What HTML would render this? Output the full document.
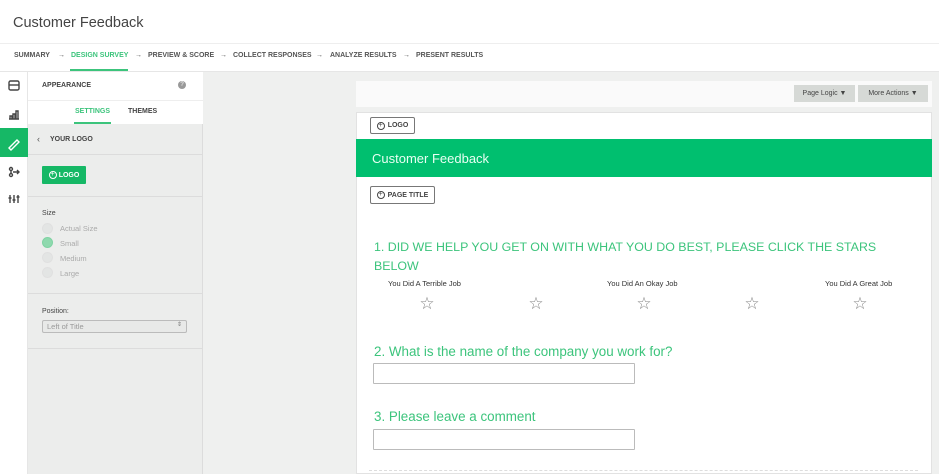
<!DOCTYPE html>
<html><head><style>
*{box-sizing:border-box;margin:0;padding:0}
body{width:939px;height:474px;overflow:hidden;background:#fff;font-family:"Liberation Sans",sans-serif;position:relative;color:#333}
.abs{position:absolute}
.nav span{position:absolute;top:52px;font-size:7px;font-weight:bold;color:#555;letter-spacing:0}
.arr{color:#ccc;font-weight:normal!important}
.btn{position:absolute;border:1px solid #777;border-radius:2px;background:#fff;font-size:7px;font-weight:bold;color:#444;display:flex;align-items:center;justify-content:center;gap:3px}
.plus{display:inline-block;width:8px;height:8px;border:1px solid currentColor;border-radius:50%;font-size:7px;line-height:6px;text-align:center;font-weight:normal}
.star{position:absolute;top:294px;font-size:17px;color:#888;width:20px;text-align:center}
.lbl{position:absolute;top:279px;font-size:7.5px;color:#333}
.radio{position:absolute;left:42px;width:11px;height:11px;border-radius:50%;background:#e3e5e4;border:1px solid #e0e0e0}
.rl{position:absolute;left:60px;font-size:7.5px;color:#aaa}
.sep{position:absolute;left:28px;width:175px;height:1px;background:#dcdcdc}
</style></head><body>
<div class="abs" style="left:13px;top:15px;font-size:14.5px;color:#444">Customer Feedback</div>
<div class="abs" style="left:0;top:43px;width:939px;height:1px;background:#eee"></div>
<div class="nav">
<span style="left:14px">SUMMARY</span><span class="arr" style="left:58px">→</span>
<span style="left:71px;color:#3cc47c">DESIGN SURVEY</span><span class="arr" style="left:135px">→</span>
<span style="left:148px">PREVIEW &amp; SCORE</span><span class="arr" style="left:220px">→</span>
<span style="left:233px">COLLECT RESPONSES</span><span class="arr" style="left:316px">→</span>
<span style="left:330px">ANALYZE RESULTS</span><span class="arr" style="left:403px">→</span>
<span style="left:416px">PRESENT RESULTS</span>
</div>
<div class="abs" style="left:70px;top:69px;width:58px;height:2px;background:#3cc47c"></div>
<div class="abs" style="left:0;top:71px;width:939px;height:1px;background:#e6e6e6"></div>
<div class="abs" style="left:203px;top:72px;width:736px;height:402px;background:#eff0ef"></div>
<div class="abs" style="left:0;top:72px;width:28px;height:402px;background:#fff;border-right:1px solid #e6e6e6"></div>
<div class="abs" style="left:0;top:128px;width:28px;height:29px;background:#16b866"></div>
<svg class="abs" style="left:0;top:72px" width="28" height="145" fill="none" stroke="#444" stroke-width="1.4">
<rect x="9" y="9" width="10" height="9" rx="1.5"/><line x1="9" y1="13" x2="19" y2="13"/>
<path d="M9 47h10M10 47v-3h2v3M13 47v-5h2v5M16 47v-8h2v8"/>
<path d="M9 76l8-8 2 2-8 8z" stroke="#fff"/>
<circle cx="11" cy="97" r="1.5"/><circle cx="11" cy="103" r="1.5"/><path d="M11 98.5v3M13 100h6M17 98l2 2-2 2"/>
<path d="M10 123v8M14 123v8M18 123v8M8.5 126h3M12.5 128h3M16.5 125h3"/>
</svg>
<div class="abs" style="left:28px;top:72px;width:175px;height:402px;background:#ecedec;border-right:1px solid #dcdcdc"></div>
<div class="abs" style="left:28px;top:72px;width:175px;height:52px;background:#fff"></div>
<div class="abs" style="left:42px;top:82px;font-size:7px;font-weight:bold;color:#444">APPEARANCE</div>
<div class="abs" style="left:178px;top:81px;width:8px;height:8px;border-radius:50%;background:#999;color:#fff;font-size:6px;text-align:center;line-height:8px">?</div>
<div class="sep" style="top:100px;background:#eee"></div>
<div class="abs" style="left:75px;top:108px;font-size:7px;font-weight:bold;color:#3cc47c">SETTINGS</div>
<div class="abs" style="left:74px;top:122px;width:37px;height:2px;background:#3cc47c"></div>
<div class="abs" style="left:128px;top:108px;font-size:7px;font-weight:bold;color:#444">THEMES</div>
<div class="abs" style="left:37px;top:134px;font-size:9px;color:#555">‹</div>
<div class="abs" style="left:50px;top:136px;font-size:7px;font-weight:bold;color:#444">YOUR LOGO</div>
<div class="sep" style="top:154px"></div>
<div class="abs" style="left:42px;top:166px;width:44px;height:18px;background:#16b866;border-radius:1px;color:#fff;font-size:7px;font-weight:bold;display:flex;align-items:center;justify-content:center;gap:2px"><span class="plus" style="border-color:#fff">+</span>LOGO</div>
<div class="sep" style="top:196px"></div>
<div class="abs" style="left:42px;top:210px;font-size:7px;color:#444">Size</div>
<div class="radio" style="top:223px"></div><div class="rl" style="top:224px">Actual Size</div>
<div class="radio" style="top:237px;background:#8fd9ae;border-color:#7fd3a3"></div><div class="rl" style="top:239px">Small</div>
<div class="radio" style="top:252px"></div><div class="rl" style="top:254px">Medium</div>
<div class="radio" style="top:267px"></div><div class="rl" style="top:269px">Large</div>
<div class="sep" style="top:293px"></div>
<div class="abs" style="left:42px;top:308px;font-size:7px;color:#444">Position:</div>
<div class="abs" style="left:42px;top:320px;width:145px;height:13px;border:1px solid #bbb;border-radius:2px;background:#e8e9e8;font-size:7.5px;color:#999;padding:1px 4px">Left of Title<span style="position:absolute;right:4px;top:0;font-size:6px;color:#777">⇕</span></div>
<div class="sep" style="top:348px"></div>
<div class="abs" style="left:356px;top:81px;width:576px;height:26px;background:#fafafa"></div>
<div class="abs" style="left:794px;top:85px;width:61px;height:17px;background:#d6d9d6;font-size:7px;color:#444;text-align:center;line-height:17px">Page Logic ▼</div>
<div class="abs" style="left:858px;top:85px;width:70px;height:17px;background:#d6d9d6;font-size:7px;color:#444;text-align:center;line-height:17px">More Actions ▼</div>
<div class="abs" style="left:356px;top:112px;width:576px;height:362px;background:#fff;border:1px solid #e2e2e2"></div>
<div class="btn" style="left:370px;top:117px;width:45px;height:17px"><span class="plus">+</span>LOGO</div>
<div class="abs" style="left:356px;top:139px;width:576px;height:38px;background:#00bf6f"></div>
<div class="abs" style="left:372px;top:151px;font-size:13px;color:#e8fff3">Customer Feedback</div>
<div class="btn" style="left:370px;top:186px;width:65px;height:18px"><span class="plus">+</span>PAGE TITLE</div>
<div class="abs" style="left:374px;top:238px;width:540px;font-size:12.4px;color:#3cc47c;line-height:19px">1. DID WE HELP YOU GET ON WITH WHAT YOU DO BEST, PLEASE CLICK THE STARS BELOW</div>
<div class="lbl" style="left:388px">You Did A Terrible Job</div>
<div class="lbl" style="left:607px">You Did An Okay Job</div>
<div class="lbl" style="left:825px">You Did A Great Job</div>
<div class="star" style="left:417px">☆</div>
<div class="star" style="left:526px">☆</div>
<div class="star" style="left:634px">☆</div>
<div class="star" style="left:742px">☆</div>
<div class="star" style="left:850px">☆</div>
<div class="abs" style="left:374px;top:344px;font-size:13.4px;color:#3cc47c">2. What is the name of the company you work for?</div>
<div class="abs" style="left:373px;top:363px;width:262px;height:21px;border:1px solid #bbb;border-radius:1px"></div>
<div class="abs" style="left:374px;top:409px;font-size:13.4px;color:#3cc47c">3. Please leave a comment</div>
<div class="abs" style="left:373px;top:429px;width:262px;height:21px;border:1px solid #bbb;border-radius:1px"></div>
<div class="abs" style="left:369px;top:470px;width:549px;height:1px;border-top:1px dashed #ddd"></div>
</body></html>
